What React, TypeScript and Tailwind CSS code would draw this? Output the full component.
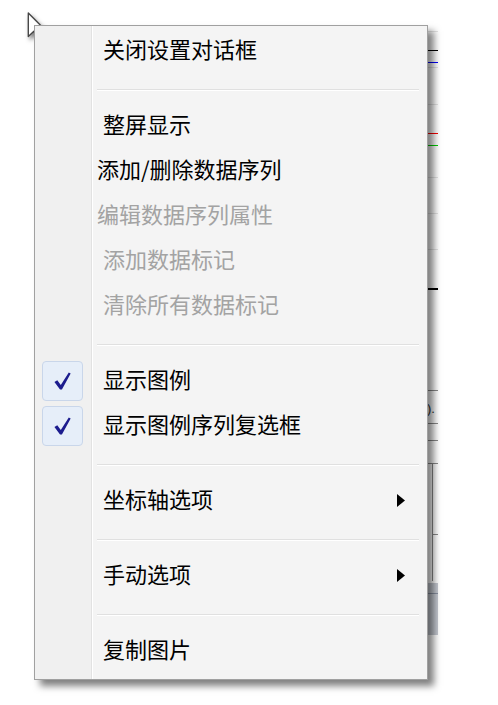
import type { ReactNode } from "react";

type Item =
  | { kind: "item"; label: string; disabled?: boolean; checked?: boolean; submenu?: boolean; tight?: boolean }
  | { kind: "sep" };

const ITEMS: Item[] = [
  { kind: "item", label: "关闭设置对话框" },
  { kind: "sep" },
  { kind: "item", label: "整屏显示" },
  { kind: "item", label: "添加/删除数据序列", tight: true },
  { kind: "item", label: "编辑数据序列属性", disabled: true, tight: true },
  { kind: "item", label: "添加数据标记", disabled: true },
  { kind: "item", label: "清除所有数据标记", disabled: true },
  { kind: "sep" },
  { kind: "item", label: "显示图例", checked: true },
  { kind: "item", label: "显示图例序列复选框", checked: true },
  { kind: "sep" },
  { kind: "item", label: "坐标轴选项", submenu: true },
  { kind: "sep" },
  { kind: "item", label: "手动选项", submenu: true },
  { kind: "sep" },
  { kind: "item", label: "复制图片" },
];

function CheckBox() {
  return (
    <span className="flex h-[40px] w-[41px] items-center justify-center rounded-[4px] border border-[#c9d6ea] bg-[#e6eef9]">
      <svg viewBox="0 0 20 20" className="h-[20px] w-[19px]" aria-hidden="true">
        <path d="M1.5 11 L4.5 9.2 L8.2 14.2 L16.6 1 L18.6 2.2 L9.4 19 L7.4 19 Z" fill="#1c1c8e" />
      </svg>
    </span>
  );
}

function SubArrow() {
  return (
    <svg viewBox="0 0 8 13" className="h-[13px] w-[8px]" aria-hidden="true">
      <path d="M0 0 L8 6.5 L0 13 Z" fill="#000" />
    </svg>
  );
}

function Row({ item }: { item: Extract<Item, { kind: "item" }> }) {
  return (
    <div className="flex h-[45px] items-center">
      <div className="flex w-[58px] shrink-0 items-center pl-[7px]">{item.checked && <CheckBox />}</div>
      <div
        className={`flex flex-1 items-center justify-between pr-[22px] text-[22px] leading-none ${
          item.tight ? "pl-[4px]" : "pl-[10px]"
        } ${item.disabled ? "text-[#a3a3a3]" : "text-black"}`}
      >
        <span className="pb-[6px]">{item.label}</span>
        {item.submenu && <SubArrow />}
      </div>
    </div>
  );
}

function Separator() {
  return (
    <div className="ml-[62px] mr-[8px] h-[30px] pt-[16px]">
      <div className="h-px bg-[#e0e0e0]" />
      <div className="h-px bg-white" />
    </div>
  );
}

// chart window peeking out behind the popup
function BehindStrip() {
  const faint = [31, 67, 104, 177, 213, 249];
  return (
    <svg width="10" height="660" className="shrink-0" aria-hidden="true">
      {faint.map((y) => (
        <rect key={y} x="0" y={y} width="10" height="1" fill="#e4e4e4" />
      ))}
      <rect x="0" y="50" width="10" height="1" fill="#000" />
      <rect x="0" y="62" width="10" height="1" fill="#0000ff" />
      <rect x="0" y="133" width="10" height="1" fill="#ff0000" />
      <rect x="0" y="145" width="10" height="1" fill="#00d000" />
      <rect x="0" y="288" width="10" height="2" fill="#000" />
      <rect x="0" y="390" width="10" height="1" fill="#8a8a8a" />
      <text x="-1" y="413" fontSize="13" fill="#333" fontFamily="Liberation Sans, sans-serif">).</text>
      <rect x="0" y="423" width="10" height="1" fill="#8a8a8a" />
      <rect x="0" y="440" width="10" height="1" fill="#8a8a8a" />
      <rect x="0" y="463" width="10" height="1" fill="#8a8a8a" />
      <rect x="4" y="463" width="1" height="118" fill="#8a8a8a" />
      <rect x="4" y="534" width="6" height="1" fill="#8a8a8a" />
      <rect x="0" y="583" width="10" height="52" fill="#c4c8d0" />
      <rect x="0" y="593" width="10" height="1" fill="#8890a0" />
    </svg>
  );
}

function Cursor() {
  return (
    <svg
      viewBox="0 0 13 20"
      className="absolute left-[27px] top-[12px] h-[30px] w-[20px] drop-shadow-[2px_3px_2px_rgba(0,0,0,0.5)]"
      aria-hidden="true"
    >
      <path
        d="M0.7 0.7 L0.7 16.3 L4.4 12.8 L7.1 18.8 L9.5 17.8 L6.9 11.9 L11.8 11.9 Z"
        fill="#fff"
        stroke="#444"
        strokeWidth="0.9"
        strokeLinejoin="round"
      />
    </svg>
  );
}

export default function App(): ReactNode {
  return (
    <div className="relative h-[705px] w-[498px] overflow-hidden bg-white font-['Noto_Sans_CJK_SC','Noto_Sans',sans-serif]">
      <div className="flex items-start pl-[34px]">
        <div className="relative z-10 mt-[25px] w-[394px] border border-[#a0a0a0] bg-[linear-gradient(to_right,#f0f0f0_56px,#e2e2e2_56px,#e2e2e2_57px,#ffffff_57px,#ffffff_58px,#f4f4f4_58px)] pb-[6px] pt-[2px] shadow-[6px_6px_7px_rgba(0,0,0,0.5)]">
          {ITEMS.map((it, i) => (it.kind === "sep" ? <Separator key={i} /> : <Row key={i} item={it} />))}
        </div>
        <BehindStrip />
      </div>
      <Cursor />
    </div>
  );
}
